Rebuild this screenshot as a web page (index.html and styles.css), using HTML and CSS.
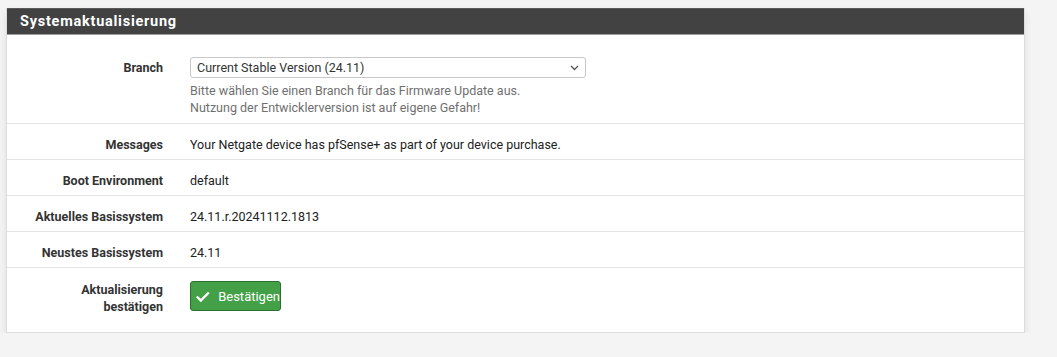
FILE: index.html
```html
<!DOCTYPE html>
<html lang="de">
<head>
    <meta charset="UTF-8">
    <title>Systemaktualisierung</title>
    <link rel="stylesheet" href="styles.css">
</head>
<body>
    <div class="panel">
        <div class="panel-heading">Systemaktualisierung</div>
        <div class="panel-body">
            <div class="form-row first">
                <div class="label">Branch</div>
                <div class="value">
                    <div class="select">
                        <span>Current Stable Version (24.11)</span>
                        <svg class="caret" width="9" height="6" viewBox="0 0 9 6">
                            <path d="M1 1 L4.5 4.5 L8 1" fill="none" stroke="#555" stroke-width="1.3"/>
                        </svg>
                    </div>
                    <div class="help">
                        Bitte wählen Sie einen Branch für das Firmware Update aus.<br>
                        Nutzung der Entwicklerversion ist auf eigene Gefahr!
                    </div>
                </div>
            </div>
            <div class="form-row">
                <div class="label">Messages</div>
                <div class="value">Your Netgate device has pfSense+ as part of your device purchase.</div>
            </div>
            <div class="form-row">
                <div class="label">Boot Environment</div>
                <div class="value">default</div>
            </div>
            <div class="form-row">
                <div class="label">Aktuelles Basissystem</div>
                <div class="value">24.11.r.20241112.1813</div>
            </div>
            <div class="form-row">
                <div class="label">Neustes Basissystem</div>
                <div class="value">24.11</div>
            </div>
            <div class="form-row last">
                <div class="label">Aktualisierung<br>bestätigen</div>
                <div class="value">
                    <button class="btn-success">
                        <svg width="17" height="13" viewBox="0 0 17 13">
                            <path d="M2 6.5 L6.5 11 L15.5 2" fill="none" stroke="#fff" stroke-width="2.6"/>
                        </svg>
                        Bestätigen
                    </button>
                </div>
            </div>
        </div>
    </div>
</body>
</html>
```

FILE: styles.css
```css
body {
    margin: 0;
    padding: 8px 32px 0 6px;
    background: #f4f4f4;
    font-family: Roboto, 'Liberation Sans', sans-serif;
    font-size: 12.5px;
    color: #212121;
}

.panel {
    background: #fff;
    border: 1px solid #ddd;
    border-top: none;
    box-shadow: 0 4px 8px rgba(0, 0, 0, 0.09);
}

.panel-heading {
    background: #424242;
    color: #fff;
    font-weight: 700;
    font-size: 14.5px;
    letter-spacing: 0.75px;
    height: 25px;
    line-height: 25px;
    padding: 0 13px;
    border-top: 1px solid #5a5a5a;
    border-bottom: 1px solid #9e9e9e;
}

.form-row {
    display: grid;
    grid-template-columns: 172px 1fr;
    border-bottom: 1px solid #e4e4e4;
    padding: 12px 0 6px;
    line-height: 17px;
}

.form-row.first {
    padding: 22px 0 7px;
}

.form-row.last {
    border-bottom: none;
    padding: 13px 0 17px;
}

.label {
    text-align: right;
    font-weight: 700;
    color: #333;
    padding-right: 16px;
}

.form-row.first .label {
    padding-top: 2px;
}

.value {
    padding-left: 11px;
}

.select {
    width: 382px;
    height: 19px;
    border: 1px solid #c8c8c8;
    border-radius: 3px;
    display: flex;
    align-items: center;
    justify-content: space-between;
    padding: 0 6px;
    color: #333;
    line-height: 19px;
}

.help {
    color: #6f6f6f;
    margin-top: 4px;
}

.btn-success {
    display: flex;
    align-items: center;
    gap: 8px;
    height: 30px;
    width: 91px;
    padding: 0 0 0 4px;
    background: #43a047;
    border: 1px solid #2e6e30;
    border-radius: 3px;
    color: #fff;
    font-family: Roboto, 'Liberation Sans', sans-serif;
    font-size: 13px;
}
```
